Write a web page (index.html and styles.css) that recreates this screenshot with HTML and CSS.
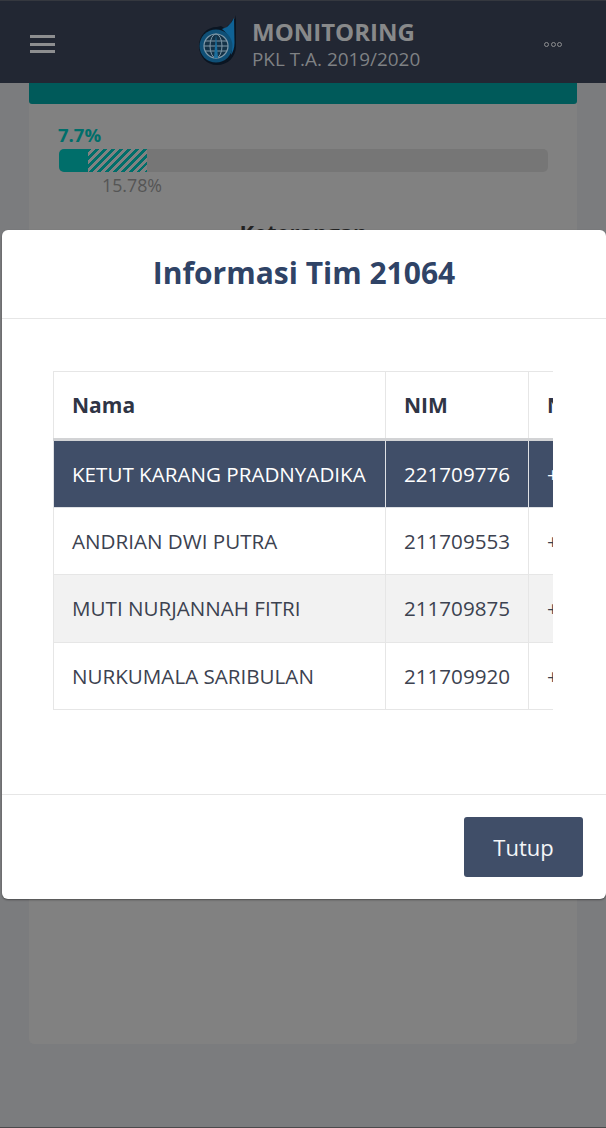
FILE: index.html
```html
<!DOCTYPE html>
<html lang="id">
<head>
<meta charset="utf-8">
<title>Monitoring PKL</title>
<link rel="stylesheet" href="styles.css">
</head>
<body>
<header class="topbar">
  <div class="burger"><span></span><span></span><span></span></div>
  <div class="brand">
    <svg class="logo" width="40" height="52" viewBox="0 0 40 52">
      <path d="M38 0 L37 4 L34 5 L33 9 L30 10 L28 14 L23 11 L19 12 C9 12 1 20 1 31 C1 42 9 50 19 50 C30 50 38 42 38 31 Z" fill="#0a1522"/>
      <path d="M36 3 L36.500 28 C36.500 33 35 37 33 40 C35 30 32 20 24 14 L29 12 L33 8 Z" fill="#0f6295"/>
      <circle cx="18" cy="31" r="16.500" fill="#0f4f76"/>
      <circle cx="18" cy="31" r="12" fill="#143247" stroke="#7f98a8" stroke-width="1.200"/>
      <ellipse cx="18" cy="31" rx="6" ry="12" fill="none" stroke="#7f98a8" stroke-width="1"/>
      <path d="M7 26 H29 M6 31 H30 M7 36 H29" stroke="#7f98a8" stroke-width="1"/>
      <path d="M18 19 L20 43 H16 Z" fill="#1b6f9e"/>
    </svg>
    <div class="brand-text">
      <div class="brand-title">MONITORING</div>
      <div class="brand-sub">PKL T.A. 2019/2020</div>
    </div>
  </div>
  <div class="dots"><i></i><i></i><i></i></div>
</header>

<main class="card">
  <div class="card-head"></div>
  <div class="card-body">
    <div class="pct-main">7.7%</div>
    <div class="track">
      <div class="fill"></div>
      <div class="hatch"></div>
    </div>
    <div class="pct-sub">15.78%</div>
    <div class="legend-title">Keterangan</div>
  </div>
</main>

<section class="modal">
  <div class="modal-head">Informasi Tim 21064</div>
  <div class="modal-body">
    <div class="table-wrap">
      <table class="team">
        <thead>
          <tr><th>Nama</th><th>NIM</th><th>No. HP</th></tr>
        </thead>
        <tbody>
          <tr class="active"><td>KETUT KARANG PRADNYADIKA</td><td>221709776</td><td>+6281234567</td></tr>
          <tr><td>ANDRIAN DWI PUTRA</td><td>211709553</td><td>+6281234567</td></tr>
          <tr class="striped"><td>MUTI NURJANNAH FITRI</td><td>211709875</td><td>+6281234567</td></tr>
          <tr><td>NURKUMALA SARIBULAN</td><td>211709920</td><td>+6281234567</td></tr>
        </tbody>
      </table>
    </div>
  </div>
  <div class="modal-foot"><button class="close-btn">Tutup</button></div>
</section>
</body>
</html>
```
FILE: styles.css
```css
* { box-sizing: border-box; }
html, body { margin: 0; padding: 0; }
body {
  width: 606px;
  height: 1128px;
  overflow: hidden;
  position: relative;
  background: #7b7c7e;
  border-bottom: 1px solid #4a4a4c;
  font-family: "Open Sans", "Liberation Sans", sans-serif;
}
.topbar {
  height: 83px;
  background: #222733;
  border-top: 1px solid #35383f;
  display: flex;
  align-items: center;
  padding: 4px 44px 0 30px;
}
.burger { display: flex; flex-direction: column; gap: 4.500px; width: 25px; }
.burger span { display: block; height: 3px; background: #8d8e90; }
.brand { display: flex; align-items: center; gap: 14px; margin-left: 143px; }
.logo { margin-top: -6px; }
.brand-title { font-size: 24px; line-height: 30px; font-weight: 700; color: #88898a; }
.brand-sub { font-size: 18.900px; line-height: 25px; color: #7f8184; }
.dots { display: flex; gap: 1.500px; margin-left: auto; }
.dots i { width: 5px; height: 5px; border-radius: 50%; border: 1.500px solid #8d8e90; }
.card {
  margin: 0 29px;
  height: 961px;
  background: #818181;
  border-radius: 0 0 5px 5px;
}
.card-head { height: 21px; background: #005a5a; border-radius: 0 0 3px 3px; }
.card-body { padding: 20px 29px 0 30px; }
.pct-main { font-size: 18.500px; line-height: 22px; font-weight: 700; color: #006e6a; margin-left: -1px; }
.track {
  height: 23px;
  margin-top: 3px;
  background: #767676;
  border-radius: 5px;
  display: flex;
  overflow: hidden;
}
.fill { width: 29px; background: #006e6a; }
.hatch {
  width: 59px;
  background: repeating-linear-gradient(135deg, #006e6a 0 2.600px, #818181 2.600px 5.600px);
}
.pct-sub { margin-left: 43px; font-size: 17.800px; line-height: 27px; color: #555; }
.legend-title { margin-top: 18px; text-align: center; font-size: 22px; line-height: 30px; font-weight: 700; color: #222; }
.modal {
  position: absolute;
  left: 2px;
  top: 230px;
  width: 604px;
  height: 669px;
  background: #fff;
  border-radius: 6px;
  display: flex;
  flex-direction: column;
  box-shadow: 0 1px 2px rgba(0, 0, 0, .4);
}
.modal-head {
  height: 89px;
  border-bottom: 1px solid #e6e6e6;
  text-align: center;
  font-size: 30px;
  font-weight: 700;
  line-height: 86px;
  color: #2f4366;
}
.modal-body { flex: 1; padding: 52px 0 0 51px; }
.table-wrap { width: 500px; overflow: hidden; }
.team { border-collapse: collapse; width: 700px; table-layout: fixed; font-size: 20.600px; color: #3c4250; }
.team th:nth-child(1) { width: 332px; }
.team th:nth-child(2) { width: 143px; }
.team th, .team td {
  border: 1px solid #e6e6e6;
  padding: 0 18px;
  text-align: left;
  white-space: nowrap;
  overflow: hidden;
}
.team th { height: 68px; font-weight: 700; font-size: 21px; color: #2f3545; border-bottom: 3px solid #d2d3d5; }
.team td { height: 67.500px; }
.team .active td { background: #404e68; color: #fff; border-color: #dfe1e5; }
.team .striped td { background: #f2f2f2; }
.modal-foot {
  height: 105px;
  border-top: 1px solid #e6e6e6;
  display: flex;
  justify-content: flex-end;
  align-items: flex-start;
  padding: 22px 23px 0 0;
}
.close-btn {
  width: 119px;
  height: 60px;
  background: #404e68;
  color: #f4f6f8;
  border: 0;
  border-radius: 3px;
  font: 400 22px "Open Sans", sans-serif;
}
```
